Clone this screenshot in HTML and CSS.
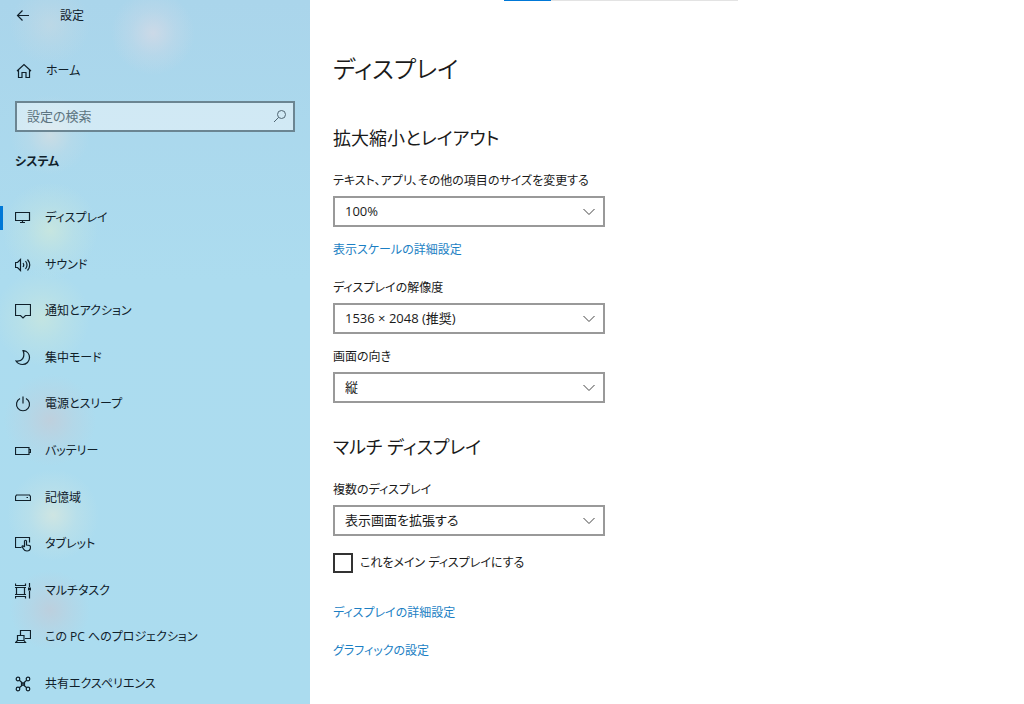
FILE: index.html
```html
<!DOCTYPE html>
<html lang="ja">
<head>
    <meta charset="UTF-8">
    <meta name="viewport" content="width=device-width, initial-scale=1.0">
    <title>設定</title>
    <link rel="stylesheet" href="styles.css">
</head>
<body>
    <div class="app">
        <aside class="sidebar">
            <header class="titlebar">
                <button type="button" class="back" aria-label="戻る">
                    <svg class="icon" viewBox="0 0 16 16"><path d="M14 7.500H2.500M7.500 2.500L2.500 7.500l5 5"/></svg>
                </button>
                <span>設定</span>
            </header>

            <a href="#" class="home">
                <svg class="icon" viewBox="0 0 16 16"><path d="M1 8L8 1.500 15 8M2.500 7v7.500h3.500V9.500h4v5h3.500V7"/></svg>
                ホーム
            </a>

            <form class="search">
                <input type="search" placeholder="設定の検索" aria-label="設定の検索">
                <svg class="search-icon" viewBox="0 0 14 14"><circle cx="8.500" cy="5.500" r="4"/><path d="M5.500 8.500L1 13"/></svg>
            </form>

            <h2 class="category">システム</h2>

            <nav class="menu">
                <a href="#" class="active">
                    <svg class="icon" viewBox="0 0 16 16"><path d="M.5 2.500h14v8H.5zM7.500 10.500v2M5 12.500h5"/></svg>
                    ディスプレイ
                </a>
                <a href="#">
                    <svg class="icon" viewBox="0 0 16 16"><path d="M.5 5.500h2L5.500 2.500v11l-3-3h-2zM8 6q1.500 2 0 4M10.500 4q3 4 0 8M12.500 2.500q4.500 5.500 0 11"/></svg>
                    サウンド
                </a>
                <a href="#">
                    <svg class="icon" viewBox="0 0 16 16"><path d="M.5 1.500h15v11h-5L8 15l-2.500-2.500h-5z"/></svg>
                    通知とアクション
                </a>
                <a href="#">
                    <svg class="icon" viewBox="0 0 16 16"><path d="M8 .5c4 .5 6.500 3.500 6.500 7 0 4-3 7-7 7-3 0-5-1.300-6.500-3.500C7 12 10.500 7 8 .5z"/></svg>
                    集中モード
                </a>
                <a href="#">
                    <svg class="icon" viewBox="0 0 16 16"><path d="M8 .5v7M5 2.500a6.500 6.500 0 1 0 6 0"/></svg>
                    電源とスリープ
                </a>
                <a href="#">
                    <svg class="icon" viewBox="0 0 16 16"><path d="M.5 4.500h13.500v7H.5zM14 6.500h1.500v3H14"/></svg>
                    バッテリー
                </a>
                <a href="#">
                    <svg class="icon" viewBox="0 0 16 16"><path d="M.5 10.500V6.500L1.500 5h13l1 1.500v4zM11.500 7.500H13"/></svg>
                    記憶域
                </a>
                <a href="#">
                    <svg class="icon" viewBox="0 0 16 16"><path d="M6.500 11.500h-6v-10h14v5M9.500 11V5q1-1.500 2 0v4l3 .5q1 .5 1 1.500c0 2.500-1 4-3.500 4-2 0-3-1-3.500-2L7 10.500q.5-1.500 2.500.5"/></svg>
                    タブレット
                </a>
                <a href="#">
                    <svg class="icon" viewBox="0 0 16 16"><path d="M.5.500v2h10v-2M0 4.500h11M1.500 4.500v7M9.500 4.500v7M0 11.500h11M.5 15.500v-2h10v2M14.500 0v4M14.500 8v7.500"/><path class="solid" d="M13 4.500h3v3h-3z"/></svg>
                    マルチタスク
                </a>
                <a href="#">
                    <svg class="icon" viewBox="0 0 16 16"><path d="M5.500 6.500v-5h10v8H10M2.500 6.500H9v5H2.500zM2.500 11.500L.5 13.500h10L9 11.500"/></svg>
                    この PC へのプロジェクション
                </a>
                <a href="#">
                    <svg class="icon" viewBox="0 0 16 16"><circle cx="3" cy="3" r="1.800"/><circle cx="13" cy="3" r="1.800"/><circle cx="3" cy="13" r="1.800"/><circle cx="13" cy="13" r="1.800"/><path d="M4.300 4.300L8 7.500l3.700-3.200M4.300 11.700L8 8.500l3.700 3.200M6.500 7.200h3v2h-3z"/></svg>
                    共有エクスペリエンス
                </a>
            </nav>
        </aside>

        <main class="content">
            <div class="progress"></div>
            <h1>ディスプレイ</h1>

            <section>
                <h2>拡大縮小とレイアウト</h2>
                <div class="field">
                    <label for="scale">テキスト、アプリ、その他の項目のサイズを変更する</label>
                    <div class="select">
                        <select id="scale"><option>100%</option></select>
                        <svg viewBox="0 0 12 8"><path d="M.5 1L6 6.500 11.500 1"/></svg>
                    </div>
                </div>
                <a href="#" class="link">表示スケールの詳細設定</a>
                <div class="field">
                    <label for="resolution">ディスプレイの解像度</label>
                    <div class="select">
                        <select id="resolution"><option>1536 × 2048 (推奨)</option></select>
                        <svg viewBox="0 0 12 8"><path d="M.5 1L6 6.500 11.500 1"/></svg>
                    </div>
                </div>
                <div class="field">
                    <label for="orientation">画面の向き</label>
                    <div class="select">
                        <select id="orientation"><option>縦</option></select>
                        <svg viewBox="0 0 12 8"><path d="M.5 1L6 6.500 11.500 1"/></svg>
                    </div>
                </div>
            </section>

            <section>
                <h2>マルチ ディスプレイ</h2>
                <div class="field">
                    <label for="multi">複数のディスプレイ</label>
                    <div class="select">
                        <select id="multi"><option>表示画面を拡張する</option></select>
                        <svg viewBox="0 0 12 8"><path d="M.5 1L6 6.500 11.500 1"/></svg>
                    </div>
                </div>
                <div class="check">
                    <input type="checkbox" id="main-display">
                    <label for="main-display">これをメイン ディスプレイにする</label>
                </div>
                <a href="#" class="link">ディスプレイの詳細設定</a>
                <a href="#" class="link">グラフィックの設定</a>
            </section>
        </main>
    </div>
</body>
</html>
```
FILE: styles.css
```css
* {
    box-sizing: border-box;
}
body {
    margin: 0;
    font-family: "Open Sans", "Noto Sans CJK JP", sans-serif;
    font-size: 12px;
    line-height: 20px;
    font-feature-settings: "palt";
    color: #1a1a1a;
    background: #fff;
}
h1, h2 {
    margin: 0;
    font-weight: normal;
}
a {
    color: inherit;
    text-decoration: none;
}
input, select, button {
    font: inherit;
    font-feature-settings: inherit;
    color: inherit;
}
svg {
    fill: none;
    stroke: currentColor;
}
.app {
    display: flex;
    min-height: 100vh;
}

/* Sidebar */
.sidebar {
    display: flex;
    flex-direction: column;
    flex: 0 0 310px;
    height: 100vh;
    padding-bottom: 8px;
    color: #10202a;
    background:
        radial-gradient(circle at 50px 25px, rgba(205, 218, 225, 0.5), rgba(205, 218, 225, 0.2) 22px, transparent 40px),
        radial-gradient(circle at 153px 33px, rgba(212, 218, 230, 0.8), rgba(212, 218, 230, 0.3) 22px, transparent 42px),
        radial-gradient(circle at 50px 135px, rgba(215, 222, 225, 0.7), rgba(215, 222, 225, 0.2) 22px, transparent 40px),
        radial-gradient(circle at 50px 230px, rgba(205, 232, 220, 0.8), rgba(205, 232, 220, 0.3) 24px, transparent 48px),
        radial-gradient(circle at 42px 318px, rgba(205, 232, 220, 0.7), rgba(205, 232, 220, 0.3) 24px, transparent 48px),
        radial-gradient(circle at 50px 420px, rgba(195, 205, 217, 0.8), rgba(195, 205, 217, 0.3) 24px, transparent 46px),
        radial-gradient(circle at 53px 515px, rgba(210, 230, 225, 0.9), rgba(210, 230, 225, 0.3) 24px, transparent 46px),
        radial-gradient(circle at 50px 610px, rgba(190, 206, 220, 0.9), rgba(190, 206, 220, 0.4) 20px, transparent 40px),
        linear-gradient(#aad5eb, #acdcef 40%, #abdcef);
}
.icon {
    flex: none;
    width: 16px;
    height: 16px;
    stroke-width: 1.2;
}
.titlebar {
    display: flex;
    align-items: center;
    gap: 29px;
    height: 32px;
    padding-left: 15px;
}
.back {
    display: flex;
    padding: 0;
    border: 0;
    background: none;
}
.home {
    display: flex;
    align-items: center;
    gap: 14px;
    height: 24px;
    margin-top: 27px;
    padding-left: 16px;
}
.search {
    position: relative;
    margin: 18px 15px 0;
}
.search input {
    display: block;
    width: 100%;
    height: 31px;
    padding: 0 32px 2px 10px;
    border: 2px solid #6b8592;
    border-radius: 0;
    outline: 0;
    appearance: none;
    font-size: 13px;
    background: rgba(255, 255, 255, 0.45);
}
.search input::placeholder {
    color: #5d7480;
    opacity: 1;
}
.search-icon {
    position: absolute;
    top: 8px;
    right: 8px;
    width: 14px;
    height: 14px;
    color: #4f6572;
}
.category {
    margin: 20px 15px 0;
    font-size: 12px;
    font-weight: bold;
}
.menu {
    display: flex;
    flex: 1;
    flex-direction: column;
    justify-content: space-between;
    margin-top: 34px;
}
.menu a {
    display: flex;
    align-items: center;
    gap: 14px;
    height: 24px;
    padding-left: 12px;
    border-left: 3px solid transparent;
}
.menu .active {
    border-color: #0078d7;
}
.solid {
    fill: currentColor;
    stroke: none;
}

/* Content */
.content {
    flex: 1;
    padding: 0 23px 44px;
}
.progress {
    width: 234px;
    height: 1px;
    margin-left: 171px;
    background: linear-gradient(to right, #0078d7 20%, #e3e3e3 20%);
}
h1 {
    margin-top: 48px;
    font-size: 24px;
    line-height: 40px;
    font-weight: 350;
}
.content h2 {
    margin: 35px 0 19px;
    font-size: 18px;
    line-height: 28px;
}
.content section + section h2 {
    margin-top: 30px;
}
.field {
    max-width: 272px;
}
.field label {
    display: block;
    margin-bottom: 5px;
    white-space: nowrap;
}
.field + .field {
    margin-top: 13px;
}
.select {
    position: relative;
}
.select select {
    display: block;
    width: 100%;
    height: 31px;
    padding: 0 32px 2px 10px;
    border: 2px solid #999;
    border-radius: 0;
    appearance: none;
    font-size: 13px;
    background: #fff;
}
.select svg {
    position: absolute;
    top: 12px;
    right: 10px;
    width: 12px;
    height: 8px;
    color: #444;
    pointer-events: none;
}
.link {
    display: block;
    width: fit-content;
    margin-top: 18px;
    color: #1c7fc4;
}
.field + .link {
    margin: 13px 0 18px;
}
.check {
    display: flex;
    align-items: center;
    gap: 7px;
    margin: 17px 0 30px;
}
.check input {
    width: 20px;
    height: 20px;
    margin: 0;
    border: 2px solid #333;
    appearance: none;
    background: #fff;
}
```
